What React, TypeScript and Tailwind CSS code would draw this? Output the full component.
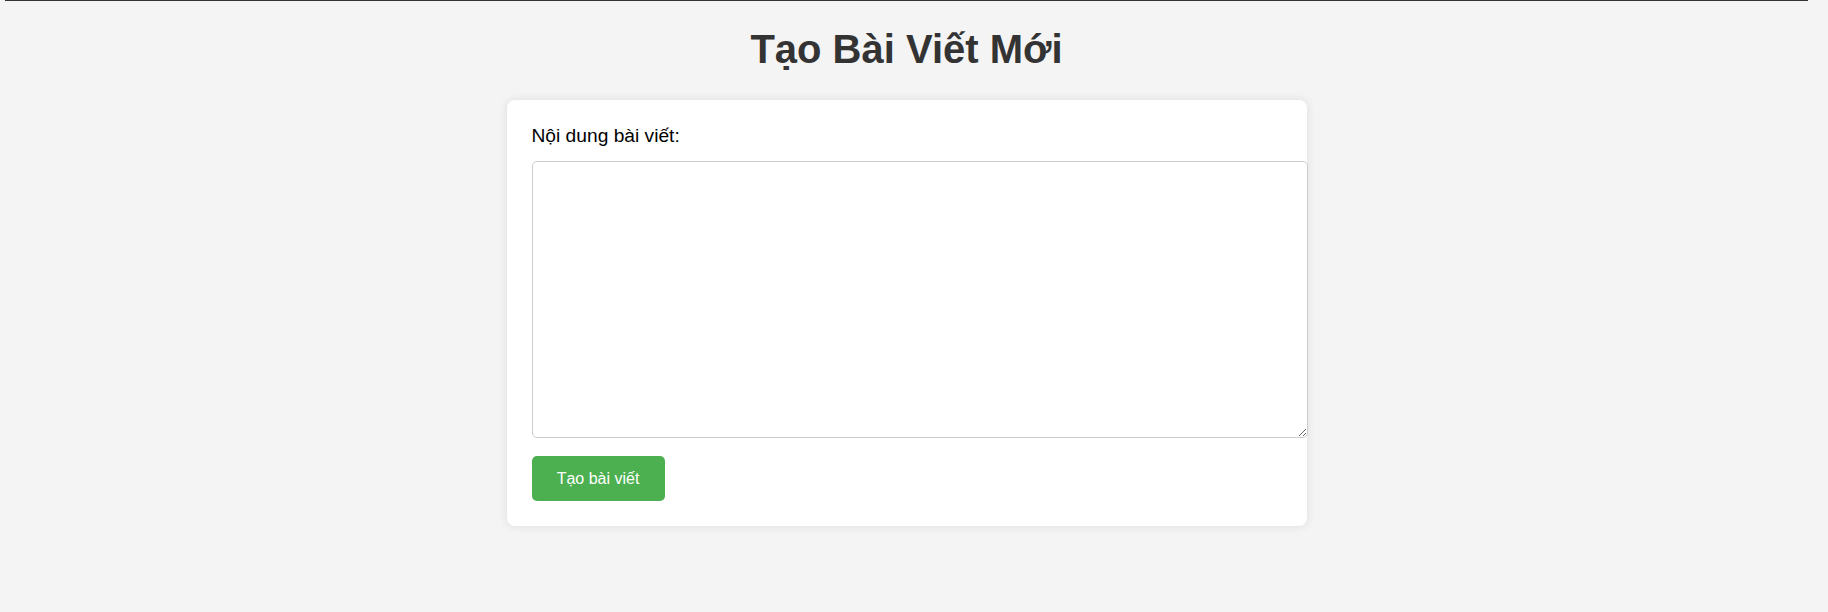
import React from 'react'

const App = () => {
  return (
    <div className="min-h-[612px] w-full bg-[#f4f4f4] font-['Liberation_Sans',Arial,sans-serif] text-black">
      <div className="w-[1813px]">
        <div className="mx-[5px] h-px bg-[#333]"></div>
        <h1 className="mt-[25px] text-center text-[40px] leading-[46px] font-bold text-[#333]">
          Tạo Bài Viết Mới
        </h1>
        <div className="mx-auto mt-[28px] w-[800px] rounded-lg bg-white p-[25px] shadow-[0_0_10px_rgba(0,0,0,0.1)]">
          <label htmlFor="content" className="block text-[19.2px] leading-[22px] mb-[14px]">
            Nội dung bài viết:
          </label>
          <textarea
            id="content"
            className="block box-content w-full h-[251px] p-3 mb-[18px] rounded-[5px] border border-[#ccc] bg-white outline-none"
          ></textarea>
          <button className="h-[45px] w-[133px] rounded-[5px] bg-[#4caf50] text-white text-base">
            Tạo bài viết
          </button>
        </div>
      </div>
    </div>
  )
}

export default App
